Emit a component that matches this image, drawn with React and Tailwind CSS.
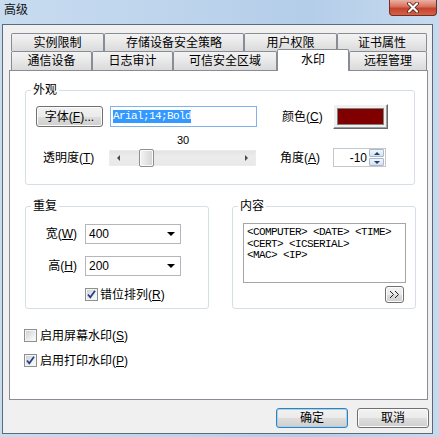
import React from 'react';

const font = "font-['Liberation_Sans','Noto_Sans_CJK_SC',sans-serif]";
const btn =
  'border border-[#707070] rounded-[3px] bg-[linear-gradient(#f2f2f2_0%,#ebebeb_50%,#dddddd_51%,#cfcfcf_100%)] shadow-[inset_0_0_0_1px_#fbfbfb]';

const row1 = [
  { label: '实例限制', w: 'w-[93px]' },
  { label: '存储设备安全策略', w: 'w-[140px]' },
  { label: '用户权限', w: 'w-[93px]' },
  { label: '证书属性', w: 'w-[90px]' },
];

const row2 = [
  { label: '通信设备', w: 'w-[81px]' },
  { label: '日志审计', w: 'w-[81px]' },
  { label: '可信安全区域', w: 'w-[104px]' },
  { label: '水印', w: 'w-[72px]', selected: true },
  { label: '远程管理', w: 'w-[78px]' },
];

const Tab = ({ label, w, selected, h }) =>
  selected ? (
    <div className={`${w} h-[22px] -mt-[2px] relative z-10 bg-white border border-b-0 border-[#898c95] rounded-t-[2px] flex justify-center pt-[3px] text-[12px] leading-[14px]`}>
      {label}
    </div>
  ) : (
    <div className={`${w} ${h} border border-b-0 border-[#898c95] rounded-t-[2px] bg-[linear-gradient(#f3f3f3,#e8e8e8_50%,#dadada)] flex items-center justify-center text-[12px] leading-[14px]`}>
      {label}
    </div>
  );

const Mn = ({ children }) => (
  <span>
    (<span className="underline underline-offset-1">{children}</span>)
  </span>
);

const Check = ({ checked }) => (
  <div className="w-[13px] h-[13px] shrink-0 border border-[#8e8f8f] bg-[linear-gradient(135deg,#c9ccd1,#f2f2f2_70%,#fdfdfd)] shadow-[inset_0_0_0_1px_#f4f4f4] relative">
    {checked && (
      <svg width="11" height="11" viewBox="0 0 11 11" className="absolute left-0 top-0">
        <path d="M2 5.5 L4.3 8.3 L9 1.8" fill="none" stroke="#21407f" strokeWidth="1.7" />
      </svg>
    )}
  </div>
);

const Group = ({ label, className, children }) => (
  <div className={`border border-[#d5dfe5] rounded-[3px] ${className}`}>
    <div className="-mt-[8px] ml-[5px] px-[2px] w-fit bg-white text-[12px] leading-[14px]">{label}</div>
    {children}
  </div>
);

const Combo = ({ value }) => (
  <div className="w-[96px] h-[20px] border border-[#b3b7bd] bg-white flex items-center pl-[3px] pr-[5px] text-[12px]">
    <span className="flex-1">{value}</span>
    <div className="w-0 h-0 border-x-[4px] border-x-transparent border-t-[4px] border-t-black" />
  </div>
);

export default function App() {
  return (
    <div className={`${font} w-[439px] h-[437px] overflow-hidden flex flex-col bg-[linear-gradient(90deg,#c8dcf0,#bdd4ec_40%,#b4cde9_70%,#c6daef)] text-black`}>
      {/* title bar */}
      <div className="h-[24px] flex justify-between items-start">
        <div className="pl-[4px] pt-[3px] text-[12px] leading-[14px] text-[#111]">高级</div>
        <div className="w-[48px] h-[16px] mr-[2px] rounded-b-[4px] border border-t-0 border-[#7a2a1e] bg-[linear-gradient(#eab0a2,#d8705e_45%,#c7412b_55%,#d0644a)] flex items-center justify-center">
          <svg width="14" height="11" viewBox="0 0 14 11">
            <path d="M3 1.5 L11 9.5 M11 1.5 L3 9.5" stroke="#4d1a12" strokeWidth="3.8" strokeLinecap="round" />
            <path d="M3 1.5 L11 9.5 M11 1.5 L3 9.5" stroke="#ffffff" strokeWidth="2.2" strokeLinecap="round" />
          </svg>
        </div>
      </div>

      {/* dialog body */}
      <div className="ml-[2px] w-[431px] h-[410px] border border-[#5d6b79] bg-[#f0f0f0] pt-[8px] pl-[6px] flex flex-col">
        <div className="flex pl-[2px] h-[18px]">
          {row1.map((t) => (
            <Tab key={t.label} {...t} h="h-[18px]" />
          ))}
        </div>
        <div className="flex pl-[2px] h-[19px] items-start">
          {row2.map((t) => (
            <Tab key={t.label} {...t} h="h-[19px]" />
          ))}
        </div>

        {/* tab page */}
        <div className="w-[419px] h-[330px] border border-[#898c95] bg-white pl-[15px] text-[12px] leading-[14px]">
          <Group label="外观" className="mt-[19px] w-[390px] h-[95px]">
            <div className="mt-[7px] h-[25px] flex items-center">
              <div className={`${btn} ml-[10px] w-[67px] h-[21px] flex items-center justify-center`}>
                字体<Mn>F</Mn>...
              </div>
              <div className="ml-[7px] w-[147px] h-[21px] border border-[#7eb4ea] bg-white flex items-center pl-[2px]">
                <span className="bg-[#3399ff] text-white font-['Liberation_Mono',monospace] text-[11px] tracking-[-0.6px] leading-[13px]">
                  Arial;14;Bold
                </span>
              </div>
              <div className="ml-[25px] w-[51px]">
                颜色<Mn>C</Mn>
              </div>
              <div className="w-[55px] h-[25px] border border-t-white border-l-white border-r-[#696969] border-b-[#696969] bg-[#f0f0f0] p-[3px] shadow-[inset_-1px_-1px_0_#a0a0a0]">
                <div className="w-full h-full border border-[#808080] bg-[#800000]" />
              </div>
            </div>
            <div className="mt-[5px] ml-[151px] h-[12px] text-[11px] leading-[12px]">30</div>
            <div className="mt-[2px] h-[19px] flex items-center">
              <div className="ml-[17px] w-[66px]">
                透明度<Mn>T</Mn>
              </div>
              <div className="w-[147px] h-[16px] bg-[linear-gradient(#e3e3e3,#ececec_40%,#e8e8e8)] border border-[#ececec] flex items-center">
                <div className="w-[17px] flex justify-center">
                  <div className="w-0 h-0 border-y-[3px] border-y-transparent border-r-[3px] border-r-[#4a4a4a]" />
                </div>
                <div className="w-[12px]" />
                <div className="w-[15px] h-[18px] border border-[#8e8f8f] rounded-[2px] bg-[linear-gradient(90deg,#f4f4f4,#e4e4e4_50%,#d4d4d4)] shadow-[inset_0_0_0_1px_#fafafa]" />
                <div className="flex-1" />
                <div className="w-[17px] flex justify-center">
                  <div className="w-0 h-0 border-y-[3px] border-y-transparent border-l-[3px] border-l-[#4a4a4a]" />
                </div>
              </div>
              <div className="ml-[24px] w-[53px]">
                角度<Mn>A</Mn>
              </div>
              <div className="w-[53px] h-[19px] border border-[#c4c8ce] bg-white flex items-center">
                <span className="flex-1 text-right pr-[2px] text-[12px]">-10</span>
                <div className="w-[16px] h-[17px] flex flex-col gap-[1px] pr-[1px]">
                  <div className="h-[8px] border border-[#a9b8cc] rounded-[1px] bg-[linear-gradient(#f2f6fb,#d6e1ee)] flex items-center justify-center">
                    <div className="w-0 h-0 border-x-[3px] border-x-transparent border-b-[3px] border-b-[#1f3f72]" />
                  </div>
                  <div className="h-[8px] border border-[#a9b8cc] rounded-[1px] bg-[linear-gradient(#f2f6fb,#d6e1ee)] flex items-center justify-center">
                    <div className="w-0 h-0 border-x-[3px] border-x-transparent border-t-[3px] border-t-[#1f3f72]" />
                  </div>
                </div>
              </div>
            </div>
          </Group>

          <div className="mt-[21px] flex gap-[23px]">
            <Group label="重复" className="w-[184px] h-[103px]">
              <div className="mt-[11px] h-[20px] flex items-center">
                <div className="w-[51px] text-right">
                  宽<Mn>W</Mn>
                </div>
                <div className="ml-[8px]">
                  <Combo value="400" />
                </div>
              </div>
              <div className="mt-[12px] h-[20px] flex items-center">
                <div className="w-[51px] text-right">
                  高<Mn>H</Mn>
                </div>
                <div className="ml-[8px]">
                  <Combo value="200" />
                </div>
              </div>
              <div className="mt-[12px] ml-[59px] h-[13px] flex items-center gap-[2px]">
                <Check checked />
                <span>
                  错位排列<Mn>R</Mn>
                </span>
              </div>
            </Group>

            <Group label="内容" className="w-[184px] h-[103px]">
              <div className="mt-[10px] ml-[10px] w-[163px] h-[60px] border border-[#a5a5a5] bg-white pl-[3px] pt-[3px] font-['Liberation_Mono',monospace] text-[11px] tracking-[-0.6px] leading-[11.5px]">
                <div>&lt;COMPUTER&gt; &lt;DATE&gt; &lt;TIME&gt;</div>
                <div>&lt;CERT&gt; &lt;ICSERIAL&gt;</div>
                <div>&lt;MAC&gt; &lt;IP&gt;</div>
              </div>
              <div className={`${btn} mt-[3px] ml-[152px] w-[19px] h-[17px] flex items-center justify-center`}>
                <svg width="11" height="9" viewBox="0 0 11 9">
                  <path d="M1 1 L4.5 4.5 L1 8 M6 1 L9.5 4.5 L6 8" fill="none" stroke="#222" strokeWidth="1" />
                </svg>
              </div>
            </Group>
          </div>

          <div className="mt-[20px] -ml-[1px] h-[13px] flex items-center gap-[3px]">
            <Check />
            <span>
              启用屏幕水印<Mn>S</Mn>
            </span>
          </div>
          <div className="mt-[12px] -ml-[1px] h-[13px] flex items-center gap-[3px]">
            <Check checked />
            <span>
              启用打印水印<Mn>P</Mn>
            </span>
          </div>
        </div>

        {/* buttons */}
        <div className="mt-[8px] pr-[3px] flex justify-end gap-[9px] text-[12px]">
          <div className="w-[72px] h-[20px] border border-[#3c7fb1] rounded-[3px] bg-[linear-gradient(#f2f2f2_0%,#ebebeb_50%,#dddddd_51%,#cfcfcf_100%)] shadow-[inset_0_0_0_1px_#9fd4f5] flex items-center justify-center">
            确定
          </div>
          <div className={`${btn} w-[72px] h-[20px] flex items-center justify-center`}>取消</div>
        </div>
      </div>
    </div>
  );
}
